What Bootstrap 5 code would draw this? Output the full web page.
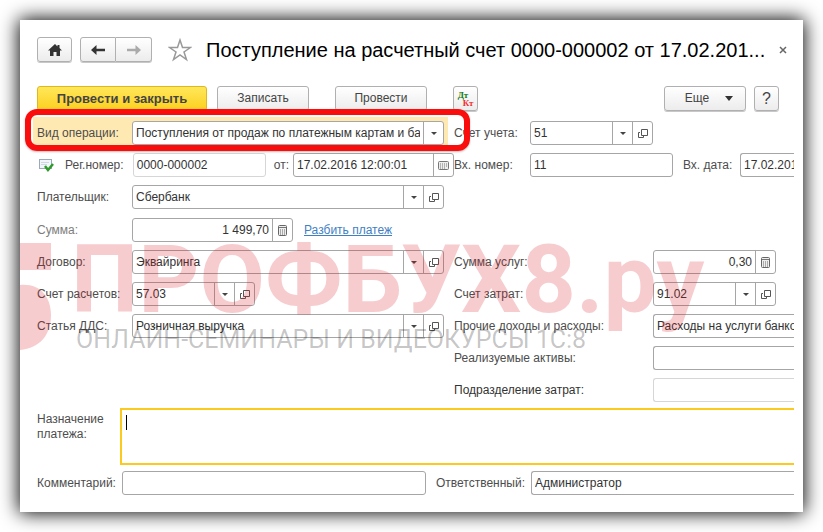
<!DOCTYPE html>
<html lang="ru">
<head>
<meta charset="utf-8">
<meta name="viewport" content="width=device-width, initial-scale=1">
<title>Поступление на расчетный счет</title>
<link href="https://cdn.jsdelivr.net/npm/bootstrap@5.3.0/dist/css/bootstrap.min.css" rel="stylesheet">
<style>
body { font-family: "Liberation Sans", Arial, sans-serif; font-size: 12px; line-height: 15px; color: #4d4d4d; background: #fff; padding: 20px; overflow: hidden; }
.doc-window { background: #fff; box-shadow: 0 0 18px 1px #000; padding: 17px 9px 17px 17px; }
.doc-title { font-size: 20px; line-height: 24px; color: #000; margin-left: 14px; }
.tool { font-size: 12px; line-height: 15px; height: 25px; padding: 0 4px; color: #444; border: 1px solid #b0b0b0; border-radius: 3px; background: linear-gradient(#fff, #ececec); box-shadow: 0 1px 0 #c8c8c8; display: inline-flex; align-items: center; justify-content: center; }
.tool-main { font-size: 13px; font-weight: 700; width: 170px; color: #444; border-color: #e0b81c; background: linear-gradient(#ffe75a, #fcd01f); }
.tool-wide { width: 92px; }
.tool-more { width: 82px; }
.tool-sq { width: 25px; }
.tool-home { width: 35px; }
.nav-pair .tool { width: 36px; }
.main-tools { gap: 26px; margin-left: 10px; }
.plain-btn { border: 0; background: none; padding: 0; line-height: 0; }
.close-x { width: 23px; }
.toolbar-row { margin-top: 24px; padding-right: 15px; }
.acc-mark { font-family: "Liberation Serif", serif; font-weight: 700; font-size: 9px; line-height: 8px; }
.acc-dt { color: #187a10; }
.acc-kt { color: #f03030; padding-left: 5px; }
.form-area { margin-top: 10px; display: grid; gap: 8px; }
.form-area + .form-area { margin-top: 9px; }
.line { display: grid; grid-template-columns: 417fr 340fr; min-height: 24px; }
.cell { display: flex; align-items: center; min-width: 0; }
.cell-left { padding-right: 10px; }
.cell-right { overflow: hidden; }
.cell label { flex: none; white-space: nowrap; }
.lab-left { width: 95px; }
.lab-short { width: 76px; }
.lab-long { width: 199px; }
.lab-comment { width: 85px; }
.lab-resp { width: 105px; padding-left: 10px; }
.lab-date { width: 67px; padding-left: 10px; }
.soft { color: #7d7d7d; }
.dark { color: #333; }
.fld { display: flex; height: 24px; border: 1px solid #a6a6a6; border-radius: 3px; background: #fff; min-width: 0; overflow: hidden; }
.fld.pale { border-color: #d6d6d6; }
.fld input { flex: 1 1 0; min-width: 0; width: 0; border: 0; padding: 0 3px; background: transparent; color: #333; font: inherit; outline: 0; }
.fld button { flex: none; width: 20px; border: 0; border-left: 1px solid #a6a6a6; background: transparent; padding: 0; line-height: 0; color: #444; }
.fld.cut { flex: 1 0 160px; border-right: 0; border-top-right-radius: 0; border-bottom-right-radius: 0; }
.fld-acc { width: 123px; flex: none; }
.fld-sum { width: 161px; }
.fld-reg { width: 133px; }
.fld-in { width: 143px; flex: none; }
.fld-comment { flex: 0 1 304px; }
.num { text-align: right; }
.highlight { background: #ffe9b3; box-shadow: 0 0 0 4px #ffe9b3; position: relative; margin-right: 10px; }
.highlight::after { content: ""; position: absolute; inset: -12px -26px -6px -12px; border: 6px solid #f90d0d; border-radius: 12px; z-index: 3; pointer-events: none; box-shadow: 0 1px 2px #8888; }
.reg-icon { width: 28px; }
.split-link { color: #3f7fc4; margin-left: 11px; }
.purpose { margin-top: 6px; position: relative; }
.purpose label { width: 83px; padding-top: 4px; flex: none; }
.purpose textarea { display: block; flex: 1; height: 57px; border: 2px solid #fcca1f; border-right: 0; resize: none; outline: 0; font: inherit; padding: 4px; }
.caret-bar { position: absolute; left: 89px; top: 7px; width: 1px; height: 15px; background: #000; }
.last-row { margin-top: 6px; overflow: hidden; }
.sheet { position: relative; }
.wm { position: absolute; white-space: nowrap; pointer-events: none; z-index: 2; }
.wm-name { left: 34px; top: 104px; font: 700 95px/110px "Roboto", sans-serif; color: rgba(215,25,32,.22); }
.wm-sub { left: 39px; top: 201px; font: 25px/36px "Roboto", sans-serif; color: rgba(0,0,0,.23); }
.wm-logo { left: -17px; top: 122px; }
</style>
<script src="https://cdn.jsdelivr.net/npm/bootstrap@5.3.0/dist/js/bootstrap.bundle.min.js"></script>
</head>
<body>
<svg class="d-none">
  <symbol id="i-down" viewBox="0 0 20 22"><path d="M7 10h6l-3 3z" fill="#444"/></symbol>
  <symbol id="i-open" viewBox="0 0 20 22"><path d="M8.500 7.500h6v6h-6z" fill="none" stroke="#555"/><path d="M7 10.500H5.500v5h5V14" fill="none" stroke="#555"/></symbol>
  <symbol id="i-calc" viewBox="0 0 20 22"><rect x="5.500" y="6.500" width="8" height="10" rx="1" fill="#eee" stroke="#666"/><path d="M6 8.500h7" stroke="#777"/><path d="M7 11h5.500M7 13h5.500M7 15h5.500" stroke="#666" stroke-dasharray="1 1"/></symbol>
  <symbol id="i-cal" viewBox="0 0 20 22"><rect x="4.500" y="7.500" width="10" height="8" rx="1" fill="#eee" stroke="#777"/><path d="M6 10h7.500M6 12h7.500M6 14h5" stroke="#777" stroke-dasharray="1 1"/></symbol>
</svg>
<main class="doc-window">
  <header class="d-flex align-items-center">
    <button class="tool tool-home" type="button" aria-label="Главная"><svg width="14" height="12" viewBox="0 0 14 12"><path d="M7 0 0 6.500h2V12h3.500V8h3v4H12V6.500h2L11.500 4V1h-2v1.500z" fill="#333"/></svg></button>
    <div class="btn-group nav-pair ms-2">
      <button class="tool rounded-end-0" type="button" aria-label="Назад"><svg width="14" height="10" viewBox="0 0 14 10"><path d="M5.500 0 0 5l5.500 5V6.200H14V3.800H5.500z" fill="#333"/></svg></button>
      <button class="tool rounded-start-0 border-start-0" type="button" aria-label="Вперед"><svg width="14" height="10" viewBox="0 0 14 10"><path d="M8.500 0 14 5l-5.500 5V6.200H0V3.800h8.500z" fill="#aaa"/></svg></button>
    </div>
    <button class="plain-btn ms-3" type="button" aria-label="В избранное"><svg width="24" height="24" viewBox="0 0 24 24"><path d="M12 2l2.500 7.500h8L16 14l2.500 7.500L12 17l-6.500 4.500L8 14 1.500 9.500h8z" fill="#fff" stroke="#999" stroke-width="1.500"/></svg></button>
    <h1 class="doc-title mb-0 flex-grow-1 text-nowrap">Поступление на расчетный счет 0000-000002 от 17.02.201...</h1>
    <button class="plain-btn close-x" type="button" aria-label="Закрыть"><svg width="8" height="8" viewBox="0 0 8 8"><path d="M1 1l6 6M7 1 1 7" stroke="#666" stroke-width="1.500"/></svg></button>
  </header>
  <div class="toolbar-row d-flex align-items-center">
    <button class="tool tool-main" type="button">Провести и закрыть</button>
    <div class="main-tools d-flex">
      <button class="tool tool-wide" type="button">Записать</button>
      <button class="tool tool-wide" type="button">Провести</button>
      <button class="tool tool-sq" type="button"><span class="acc-mark d-block text-start"><span class="acc-dt d-block">Дт</span><span class="acc-kt d-block">Кт</span></span></button>
    </div>
    <button class="tool tool-more ms-auto" type="button"><span class="ms-2">Еще</span><svg class="ms-3" width="8" height="5" viewBox="0 0 8 5"><path d="M0 0h8L4 5z" fill="#333"/></svg></button>
    <button class="tool tool-sq ms-2 fs-6" type="button">?</button>
  </div>

  <form class="sheet">
    <div class="form-area">
      <div class="line">
        <div class="cell highlight">
          <label class="lab-left" for="op">Вид операции:</label>
          <div class="fld flex-grow-1"><input id="op" value="Поступления от продаж по платежным картам и банковским кредитам"><button type="button" aria-label="Выбрать"><svg width="20" height="22"><use href="#i-down"/></svg></button></div>
        </div>
        <div class="cell cell-right">
          <label class="lab-short" for="acc">Счет учета:</label>
          <div class="fld fld-acc"><input id="acc" value="51"><button type="button" aria-label="Выбрать"><svg width="20" height="22"><use href="#i-down"/></svg></button><button type="button" aria-label="Открыть"><svg width="20" height="22"><use href="#i-open"/></svg></button></div>
        </div>
      </div>
      <div class="line">
        <div class="cell">
          <span class="reg-icon"><svg width="18" height="16" viewBox="0 0 18 16"><rect x="2.500" y="2.500" width="12" height="9" fill="#f2f6fa" stroke="#9ab"/><path d="M4 5.500h8M4 7.500h6" stroke="#ccd8e2"/><path d="M8 9l3 4 5-6" fill="none" stroke="#2f9a2a" stroke-width="2.500"/></svg></span>
          <label for="reg">Рег.номер:</label>
          <div class="fld pale fld-reg ms-auto"><input id="reg" value="0000-000002"></div>
          <label class="ps-2 pe-1" for="dt">от:</label>
          <div class="fld fld-sum"><input id="dt" value="17.02.2016 12:00:01"><button type="button" aria-label="Календарь"><svg width="20" height="22"><use href="#i-cal"/></svg></button></div>
        </div>
        <div class="cell cell-right">
          <label class="lab-short" for="inn">Вх. номер:</label>
          <div class="fld fld-in"><input id="inn" value="11"></div>
          <label class="lab-date" for="ind">Вх. дата:</label>
          <div class="fld cut"><input id="ind" value="17.02.2016"></div>
        </div>
      </div>
      <div class="line">
        <div class="cell cell-left">
          <label class="lab-left" for="payer">Плательщик:</label>
          <div class="fld flex-grow-1"><input id="payer" value="Сбербанк"><button type="button" aria-label="Выбрать"><svg width="20" height="22"><use href="#i-down"/></svg></button><button type="button" aria-label="Открыть"><svg width="20" height="22"><use href="#i-open"/></svg></button></div>
        </div>
      </div>
    </div>
    <div class="form-area">
      <div class="line">
        <div class="cell cell-left">
          <label class="lab-left soft" for="sum">Сумма:</label>
          <div class="fld fld-sum"><input class="num" id="sum" value="1 499,70"><button type="button" aria-label="Калькулятор"><svg width="20" height="22"><use href="#i-calc"/></svg></button></div>
          <a class="split-link" href="#">Разбить платеж</a>
        </div>
      </div>
      <div class="line">
        <div class="cell cell-left">
          <label class="lab-left" for="contract">Договор:</label>
          <div class="fld flex-grow-1"><input id="contract" value="Эквайринга"><button type="button" aria-label="Выбрать"><svg width="20" height="22"><use href="#i-down"/></svg></button><button type="button" aria-label="Открыть"><svg width="20" height="22"><use href="#i-open"/></svg></button></div>
        </div>
        <div class="cell cell-right">
          <label class="lab-long" for="fee">Сумма услуг:</label>
          <div class="fld fld-acc"><input class="num" id="fee" value="0,30"><button type="button" aria-label="Калькулятор"><svg width="20" height="22"><use href="#i-calc"/></svg></button></div>
        </div>
      </div>
      <div class="line">
        <div class="cell cell-left">
          <label class="lab-left" for="settle">Счет расчетов:</label>
          <div class="fld fld-acc"><input id="settle" value="57.03"><button type="button" aria-label="Выбрать"><svg width="20" height="22"><use href="#i-down"/></svg></button><button type="button" aria-label="Открыть"><svg width="20" height="22"><use href="#i-open"/></svg></button></div>
        </div>
        <div class="cell cell-right">
          <label class="lab-long" for="cost">Счет затрат:</label>
          <div class="fld fld-acc"><input id="cost" value="91.02"><button type="button" aria-label="Выбрать"><svg width="20" height="22"><use href="#i-down"/></svg></button><button type="button" aria-label="Открыть"><svg width="20" height="22"><use href="#i-open"/></svg></button></div>
        </div>
      </div>
      <div class="line">
        <div class="cell cell-left">
          <label class="lab-left" for="dds">Статья ДДС:</label>
          <div class="fld flex-grow-1"><input id="dds" value="Розничная выручка"><button type="button" aria-label="Выбрать"><svg width="20" height="22"><use href="#i-down"/></svg></button><button type="button" aria-label="Открыть"><svg width="20" height="22"><use href="#i-open"/></svg></button></div>
        </div>
        <div class="cell cell-right">
          <label class="lab-long" for="other">Прочие доходы и расходы:</label>
          <div class="fld cut"><input id="other" value="Расходы на услуги банков"></div>
        </div>
      </div>
      <div class="line">
        <div class="cell cell-left"></div>
        <div class="cell cell-right">
          <label class="lab-long" for="assets">Реализуемые активы:</label>
          <div class="fld cut"><input id="assets"></div>
        </div>
      </div>
      <div class="line">
        <div class="cell cell-left"></div>
        <div class="cell cell-right">
          <label class="lab-long dark" for="dept">Подразделение затрат:</label>
          <div class="fld pale cut"><input id="dept"></div>
        </div>
      </div>
    </div>
    <div class="purpose d-flex">
      <label for="purpose">Назначение платежа:</label>
      <textarea id="purpose"></textarea>
      <span class="caret-bar"></span>
    </div>
    <div class="last-row cell">
      <label class="lab-comment" for="comment">Комментарий:</label>
      <div class="fld fld-comment"><input id="comment"></div>
      <label class="lab-resp" for="resp">Ответственный:</label>
      <div class="fld cut"><input id="resp" value="Администратор"></div>
    </div>
    <svg class="wm wm-logo" width="34" height="110" viewBox="0 0 34 110"><path d="M0 0h31v27H0zM0 42c20-2 31 12 31 30 0 20-11 33-31 35z" fill="#d71920" fill-opacity=".22"/></svg>
    <div class="wm wm-name" aria-hidden="true">ПРОФБУХ8.ру</div>
    <div class="wm wm-sub" aria-hidden="true">ОНЛАЙН-СЕМИНАРЫ И ВИДЕОКУРСЫ 1С:8</div>
  </form>
</main>
</body>
</html>
